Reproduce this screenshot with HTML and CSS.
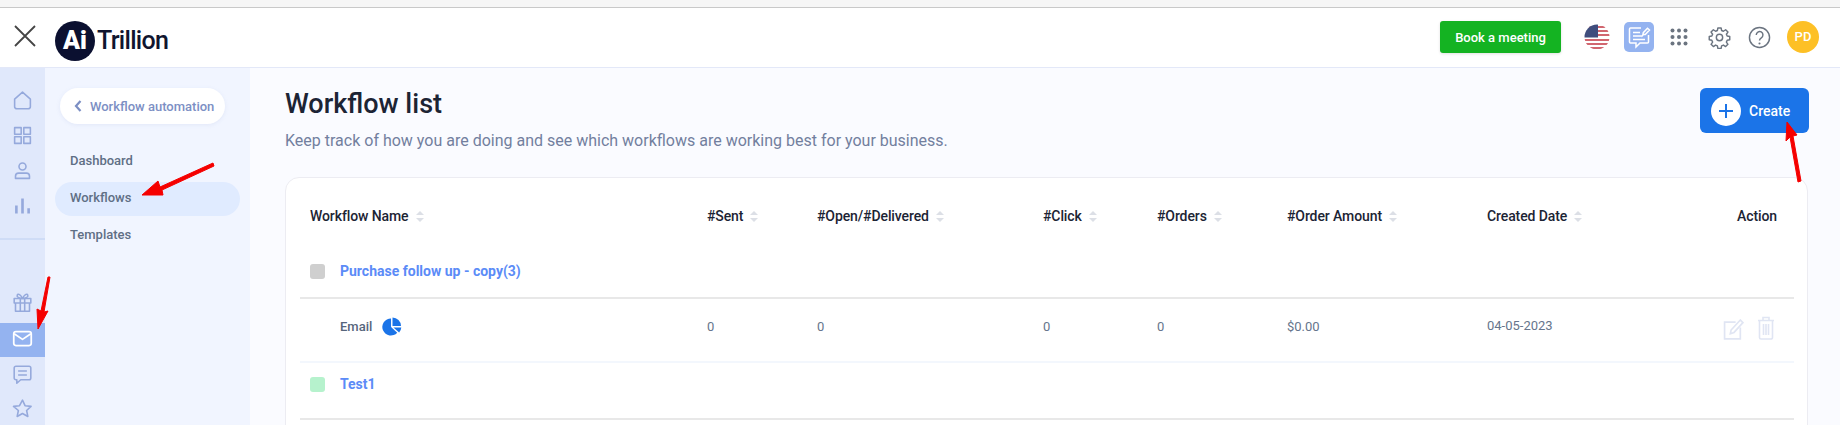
FILE: index.html
```html
<!DOCTYPE html>
<html lang="en">
<head>
<meta charset="utf-8">
<title>Workflow list</title>
<link rel="stylesheet" href="styles.css">
</head>
<body>
<div class="strip"></div>
<header class="topbar">
  <div class="brand">
    <svg class="close-icon" viewBox="0 0 22 22"><path d="M1 1l20 20M21 1L1 21"/></svg>
    <div class="logo"><span class="logo-mark">Ai</span><span class="logo-text">Trillion</span></div>
  </div>
  <div class="tools">
    <button class="book">Book a meeting</button>
    <svg class="flag" viewBox="0 0 26 26">
      <defs><clipPath id="fc"><circle cx="13" cy="13" r="12.5"/></clipPath></defs>
      <g clip-path="url(#fc)">
        <rect width="26" height="26" fill="#fff"/>
        <path d="M0 2h26v2H0zM13 6h13v2H13zM13 10h13v2H13zM0 15h26v2H0zM0 19h26v2H0zM0 23h26v2H0z" fill="#d1666f"/>
        <rect width="14" height="13.500" fill="#3f4d7d"/>
      </g>
    </svg>
    <div class="note">
      <svg viewBox="0 0 24 24"><path d="M14 3H3.500a1 1 0 0 0-1 1v13a1 1 0 0 0 1 1H9v4l4-4h7.500a1 1 0 0 0 1-1V10"/><path d="M6 7.500h7M6 11h9M6 14.500h12"/><path d="M16.500 9.500l-.7.700.5-2.500 4.200-4.500 2 1.800-4.200 4.500z"/></svg>
    </div>
    <svg class="dots" viewBox="0 0 18 18"><g fill="#6b7480"><circle cx="2.500" cy="2.500" r="2"/><circle cx="9" cy="2.500" r="2"/><circle cx="15.500" cy="2.500" r="2"/><circle cx="2.500" cy="9" r="2"/><circle cx="9" cy="9" r="2"/><circle cx="15.500" cy="9" r="2"/><circle cx="2.500" cy="15.500" r="2"/><circle cx="9" cy="15.500" r="2"/><circle cx="15.500" cy="15.500" r="2"/></g></svg>
    <svg class="gear" viewBox="0 0 24 24"><path d="M10.300 2h3.400l.5 2.700 1.900.8 2.300-1.600 2.400 2.400-1.600 2.300.8 1.900 2.700.5v3.400l-2.700.5-.8 1.900 1.600 2.300-2.400 2.400-2.300-1.600-1.900.8-.5 2.700h-3.400l-.5-2.700-1.900-.8-2.300 1.600-2.400-2.400 1.600-2.300-.8-1.900-2.700-.5v-3.400l2.700-.5.8-1.900-1.600-2.300 2.400-2.400 2.300 1.600 1.900-.8z"/><circle cx="12" cy="12" r="3.300"/></svg>
    <svg class="help" viewBox="0 0 24 24"><circle cx="12" cy="12" r="10.500"/><path d="M8.600 9.300a3.500 3.500 0 1 1 5.300 3c-1.300.8-1.900 1.400-1.900 2.900"/><circle class="help-dot" cx="12" cy="18.300" r="1.100"/></svg>
    <div class="avatar">PD</div>
  </div>
</header>
<div class="shell">
  <nav class="rail">
    <div class="rail-group">
      <div class="rail-item"><svg viewBox="0 0 24 24"><path d="M3 10.500L12 2.500l9 8V19a2.500 2.500 0 0 1-2.500 2.500h-13A2.500 2.500 0 0 1 3 19z"/></svg></div>
      <div class="rail-item"><svg viewBox="0 0 24 24"><rect x="3" y="3" width="7.500" height="7.500"/><rect x="13.500" y="3" width="7.500" height="7.500"/><rect x="3" y="13.500" width="7.500" height="7.500"/><rect x="13.500" y="13.500" width="7.500" height="7.500"/></svg></div>
      <div class="rail-item"><svg viewBox="0 0 24 24"><circle cx="12" cy="7.500" r="4"/><path d="M4 21v-2.500c0-2 1.500-3.500 3.500-3.500h9c2 0 3.500 1.500 3.500 3.500V21z"/></svg></div>
      <div class="rail-item"><svg viewBox="0 0 24 24"><path class="bars" d="M5 21v-9M12 21V4M19 21v-6"/></svg></div>
    </div>
    <div class="rail-divider"></div>
    <div class="rail-group rail-low">
      <div class="rail-item"><svg viewBox="0 0 24 24"><rect x="2.500" y="7.500" width="19" height="5"/><path d="M4 12.500V22h16v-9.500M9.500 7.500V22M14.500 7.500V22M12 7.500C10 3 7 1.500 6 3.500s2 4 6 4zM12 7.500c2-4.500 5-6 6-4s-2 4-6 4z"/></svg></div>
      <div class="rail-item is-active"><svg viewBox="0 0 24 24"><rect x="2" y="4" width="20" height="16" rx="2.500"/><path d="M2.500 6.500L12 13l9.500-6.500"/></svg></div>
      <div class="rail-item"><svg viewBox="0 0 24 24"><path d="M4.500 2.500h15a2 2 0 0 1 2 2V16a2 2 0 0 1-2 2H10l-4.500 4v-4h-1a2 2 0 0 1-2-2V4.500a2 2 0 0 1 2-2z"/><path d="M7 8h10M7 12.500h10"/></svg></div>
      <div class="rail-item"><svg viewBox="0 0 24 24"><path d="M12 2.500l2.900 6.300 6.900.8-5.100 4.700 1.400 6.800-6.100-3.400-6.100 3.400 1.400-6.800L1.700 9.600l6.900-.8z"/></svg></div>
    </div>
  </nav>
  <aside class="subnav">
    <a class="back"><svg viewBox="0 0 10 14"><path d="M7.500 2L3 7l4.500 5"/></svg><span>Workflow automation</span></a>
    <ul class="menu">
      <li>Dashboard</li>
      <li class="is-current">Workflows</li>
      <li>Templates</li>
    </ul>
  </aside>
  <main class="content">
    <div class="page-head">
      <div>
        <h1>Workflow list</h1>
        <p>Keep track of how you are doing and see which workflows are working best for your business.</p>
      </div>
      <button class="create"><span class="plus"><svg viewBox="0 0 14 14"><path d="M7 0v14M0 7h14"/></svg></span>Create</button>
    </div>
    <section class="card">
      <div class="row head-row">
        <div class="cell first">Workflow Name<i class="sort"></i></div>
        <div class="cell">#Sent<i class="sort"></i></div>
        <div class="cell">#Open/#Delivered<i class="sort"></i></div>
        <div class="cell">#Click<i class="sort"></i></div>
        <div class="cell">#Orders<i class="sort"></i></div>
        <div class="cell">#Order Amount<i class="sort"></i></div>
        <div class="cell">Created Date<i class="sort"></i></div>
        <div class="cell action">Action</div>
      </div>
      <div class="row group-row line-strong">
        <div class="group-name"><span class="status grey"></span><a>Purchase follow up - copy(3)</a></div>
      </div>
      <div class="row data-row line-soft">
        <div class="cell email-cell"><span class="email">Email</span>
          <svg class="pie" viewBox="0 0 20 20"><path d="M9 1.500a9 9 0 1 0 6.500 15L9 10.500z"/><path d="M10.500 0.500a9 9 0 0 1 9 9h-9z"/><path d="M11.500 11h8.300a9 9 0 0 1-2.300 5.200z"/></svg>
        </div>
        <div class="cell">0</div>
        <div class="cell">0</div>
        <div class="cell">0</div>
        <div class="cell">0</div>
        <div class="cell">$0.00</div>
        <div class="cell date">04-05-2023</div>
        <div class="cell action icons">
          <svg class="edit" viewBox="0 0 20 20"><path d="M12 3H1.500v16h15V8"/><path d="M7 14l.7-3.500L16.500 1 19 3.500 10.500 12.800z"/></svg>
          <svg class="trash" viewBox="0 0 18 24"><path d="M1 4.500h16M6 4.500V1.500h6v3M2.500 4.500v17a1.500 1.500 0 0 0 1.500 1.500h10a1.500 1.500 0 0 0 1.500-1.500v-17M6.500 8v11M9 8v11M11.500 8v11"/></svg>
        </div>
      </div>
      <div class="row group-row test-row line-strong">
        <div class="group-name"><span class="status green"></span><a>Test1</a></div>
      </div>
    </section>
  </main>
</div>
<svg class="annotations" viewBox="0 0 1840 425">
  <path d="M213 163L160 187 158 181 142 195 163 195 162 190 214 166z"/>
  <path d="M50 277L44 312 48 311 38 329 37 309 41 311 48 277z"/>
  <path d="M1801 181L1793 136 1797 135 1787 122 1786 141 1790 137 1798 182z"/>
</svg>
</body>
</html>
```

FILE: styles.css
```css
* { box-sizing: border-box; }
html, body { margin: 0; padding: 0; }
body {
  width: 1840px;
  height: 425px;
  overflow: hidden;
  position: relative;
  font-family: Roboto, "Liberation Sans", sans-serif;
  background: #fafbff;
}
svg { display: block; }

.strip { height: 8px; background: #f6f6f6; border-bottom: 1px solid #c9c9c9; }

.topbar {
  height: 60px;
  background: #fff;
  border-bottom: 1px solid #e3e8f8;
  display: flex;
  align-items: center;
  justify-content: space-between;
  padding: 0 21px 0 14px;
}
.brand { display: flex; align-items: center; gap: 19px; }
.close-icon { width: 22px; height: 22px; margin-top: -3px; fill: none; stroke: #444; stroke-width: 1.8; }
.logo { display: flex; align-items: center; margin-top: 6px; }
.logo-mark {
  width: 40px; height: 40px; border-radius: 50%;
  background: #0b1030; color: #fff;
  font-weight: 900; font-size: 25px; line-height: 40px; text-align: center;
}
.logo-text { margin-left: 2px; font-size: 25px; font-weight: 500; color: #10152f; letter-spacing: -0.7px; }

.tools { display: flex; align-items: center; margin-top: -1px; }
.book {
  width: 121px; height: 32px; border: 0; border-radius: 3px;
  background: #14b322; color: #fff;
  font: 500 13px Roboto, sans-serif;
  box-shadow: 0 1px 3px rgba(0,0,0,.12);
}
.flag { width: 26px; height: 26px; margin-left: 23px; }
.note {
  width: 30px; height: 30px; margin-left: 14px; border-radius: 5px;
  background: #94b3f0; display: flex; align-items: center; justify-content: center;
}
.note svg { width: 24px; height: 24px; fill: none; stroke: #fff; stroke-width: 1.5; }
.dots { width: 18px; height: 18px; margin-left: 16px; }
.gear { width: 23px; height: 23px; margin-left: 20px; fill: none; stroke: #6b7480; stroke-width: 1.5; stroke-linejoin: round; }
.help { width: 23px; height: 23px; margin-left: 17px; fill: none; stroke: #6b7480; stroke-width: 1.5; }
.help-dot { fill: #6b7480; stroke: none; }
.avatar {
  width: 32px; height: 32px; margin-left: 16px; border-radius: 50%;
  background: #fdc026; color: #fff;
  font-weight: 500; font-size: 13px; line-height: 32px; text-align: center;
}

.shell { display: flex; height: 357px; }

.rail { width: 45px; flex: none; background: #e0e8fb; padding-top: 15px; }
.rail-item { height: 35px; display: flex; align-items: center; justify-content: center; }
.rail-low .rail-item { height: 34px; }
.rail-item svg { width: 21px; height: 21px; fill: none; stroke: #95a9dc; stroke-width: 1.8; stroke-linejoin: round; }
.rail-item .bars { stroke-width: 3; }
.rail-low .rail-item.is-active { background: #94b3f0; margin-top: 4px; padding-bottom: 3px; }
.rail-item.is-active svg { stroke: #fff; stroke-width: 2; }
.rail-divider { height: 2px; margin: 15px 0 45px; background: #cfdcf6; }

.subnav { width: 205px; flex: none; background: #f1f5ff; padding: 20px 10px; }
.back {
  display: flex; align-items: center;
  width: 165px; height: 36px; margin-left: 5px; padding-left: 13px;
  border-radius: 18px; background: #fff;
  color: #7c8fc4; font-size: 13px; font-weight: 500;
  box-shadow: 0 1px 4px rgba(120,140,200,.12);
}
.back svg { width: 10px; height: 14px; margin-right: 7px; fill: none; stroke: #7c8fc4; stroke-width: 2.2; }
.menu { list-style: none; margin: 21px 0 0; padding: 0; }
.menu li {
  height: 34px; line-height: 32px; padding-left: 15px; margin-bottom: 3px;
  border-radius: 17px;
  color: #5f6f85; font-size: 13px; font-weight: 500;
}
.menu li.is-current { background: #e0ebff; }

.content { flex: 1; min-width: 0; padding: 20px 32px 0 35px; }
.page-head { display: flex; justify-content: space-between; align-items: flex-start; }
h1 { margin: 0; font-size: 27px; line-height: 32px; font-weight: 500; color: #1c2434; }
.page-head p { margin: 10px 0 0; font-size: 16px; line-height: 22px; color: #727f9e; }
.create {
  display: flex; align-items: center; margin-right: -1px;
  width: 109px; height: 45px; padding: 0 0 0 11px;
  border: 0; border-radius: 6px; background: #1b74e8; color: #fff;
  font: 500 14px Roboto, sans-serif;
}
.plus {
  width: 30px; height: 30px; margin-right: 8px; border-radius: 50%;
  background: #fff; display: flex; align-items: center; justify-content: center;
}
.plus svg { width: 14px; height: 14px; fill: none; stroke: #1b74e8; stroke-width: 2; }

.card {
  margin-top: 25px; height: 260px;
  background: #fff;
  border: 1px solid #ececf2;
  border-radius: 14px 14px 0 0;
  padding: 0 13px 0 14px;
}
.row {
  display: grid;
  grid-template-columns: 407px 110px 226px 114px 130px 200px 150px 157px;
  align-items: center;
}
.cell { display: flex; align-items: center; font-size: 13px; color: #66758c; }
.first { padding-left: 10px; }
.head-row { height: 67px; padding-top: 9px; }
.head-row .cell { font-size: 14px; font-weight: 500; color: #1c2434; letter-spacing: -.1px; }
.sort { position: relative; display: block; width: 8px; height: 11px; margin-left: 7px; }
.sort::before, .sort::after {
  content: ""; position: absolute; left: 0; border-left: 4px solid transparent; border-right: 4px solid transparent;
}
.sort::before { top: 0; border-bottom: 4px solid #dcdfe6; }
.sort::after { bottom: 0; border-top: 4px solid #dcdfe6; }
.action { justify-content: flex-end; padding-right: 17px; }

.group-row { height: 54px; }
.line-strong { border-bottom: 2px solid #e8e8e8; }
.line-soft { border-bottom: 2px solid #f3f7fd; }
.group-name { display: flex; align-items: center; padding-left: 10px; grid-column: 1 / -1; font-size: 14px; font-weight: 700; color: #5b8bf7; }
.status { width: 15px; height: 15px; border-radius: 3px; margin-right: 15px; }
.grey { background: #cfcfcf; }
.green { background: #b6f2cd; }

.data-row { height: 64px; padding-bottom: 8px; }
.email-cell { padding-left: 40px; }
.email { font-weight: 500; color: #56657c; }
.pie { width: 20px; height: 19px; margin-left: 10px; fill: #1b74e8; }
.date { margin-top: -2px; }
.icons { gap: 13px; padding-right: 19px; margin-top: 6px; }
.edit { width: 21px; height: 21px; fill: none; stroke: #e0e5f3; stroke-width: 1.6; }
.trash { width: 18px; height: 24px; margin-top: -2px; fill: none; stroke: #e0e5f3; stroke-width: 1.6; }

.group-row.test-row { height: 57px; padding-bottom: 13px; }

.annotations { position: absolute; left: 0; top: 0; width: 1840px; height: 425px; pointer-events: none; }
.annotations path { fill: #f50000; stroke: #f50000; stroke-width: 1; stroke-linejoin: round; }
```
